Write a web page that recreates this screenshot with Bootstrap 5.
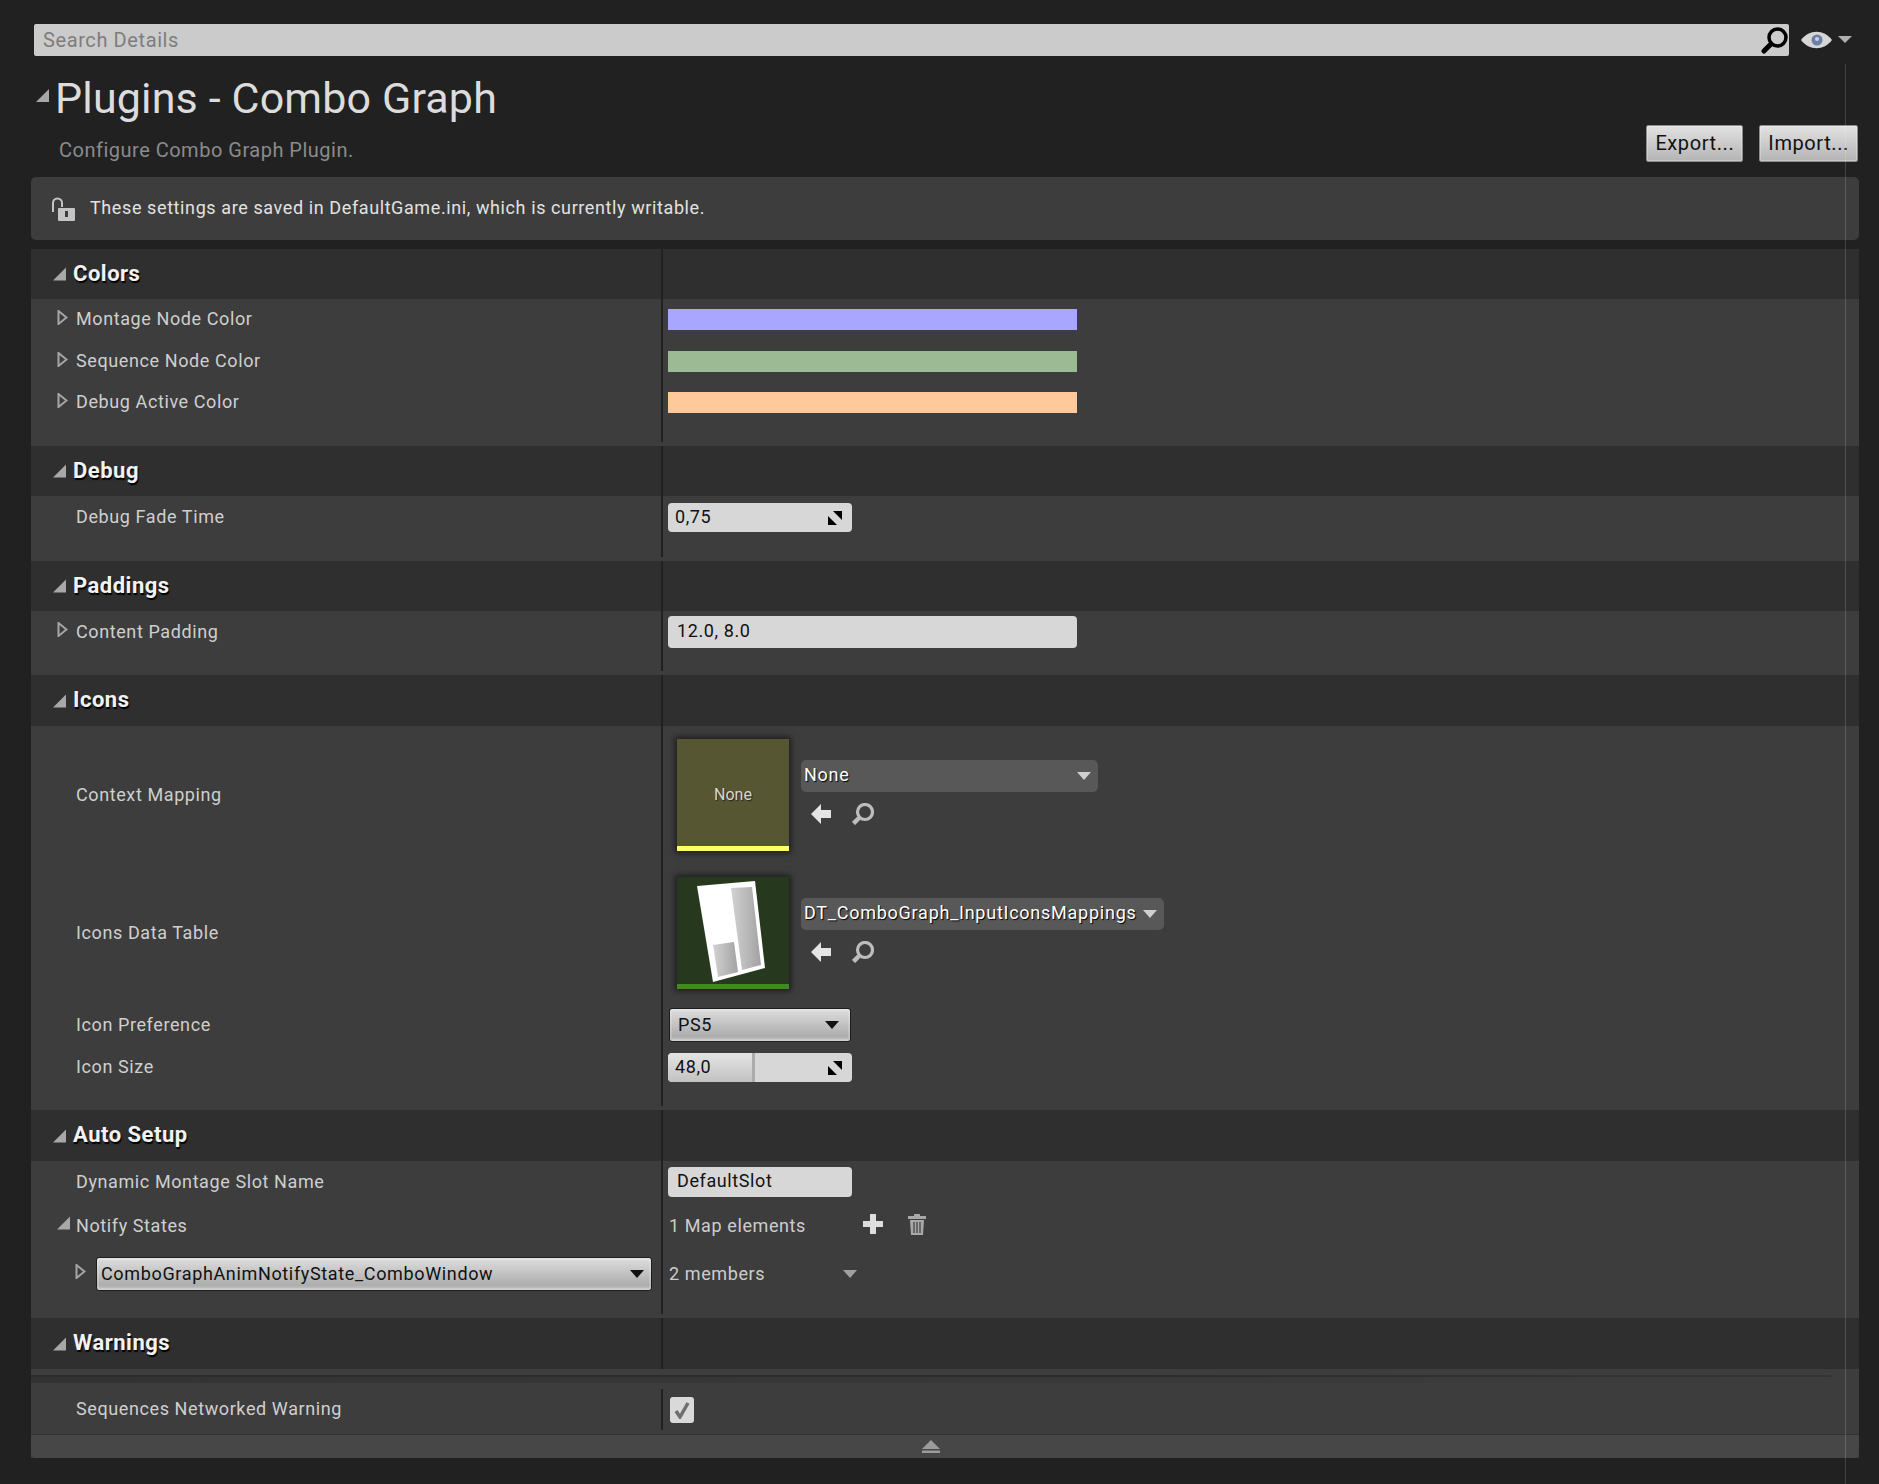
<!DOCTYPE html>
<html lang="en">
<head>
  <meta charset="UTF-8">
  <meta name="viewport" content="width=device-width, initial-scale=1.0">
  <title>Plugins - Combo Graph</title>
  <link href="https://cdn.jsdelivr.net/npm/bootstrap@5.3.0/dist/css/bootstrap.min.css" rel="stylesheet">
  <style>
    body { background: #212121; font-family: Roboto, "Liberation Sans", sans-serif; color: #cdcdcd; min-height: 1484px; position: relative; font-size: 18px; letter-spacing: .6px; overflow: hidden; }
    .ue-page { padding: 24px 20px 10px 31px; }
    .ue-guide { position: absolute; left: 1845px; top: 64px; bottom: 0; width: 1px; background: rgba(255,255,255,.16); }
    .ue-search { margin-left: 3px; width: 1755px; height: 32px; background: #cbcbcb; border-radius: 2px; padding: 0 1px 0 9px; color: #7d7d7d; font-size: 20px; line-height: 32px; }
    .ue-eye { margin-left: 12px; }
    .ue-head { height: 121px; padding-left: 5px; }
    .ue-title-row { gap: 6px; padding-top: 17px; }
    .ue-title-tri { margin-bottom: 6px; }
    .ue-title { font-size: 43px; font-weight: 400; line-height: 50px; color: #dcdcdc; margin: 0; letter-spacing: .15px; }
    .ue-desc { font-size: 20px; color: #8b8b8b; line-height: 24px; margin: 15px 0 0 23px; letter-spacing: .5px; }
    .ue-btn { height: 37px; padding: 0 8px; font-size: 20px; line-height: 35px; color: #111; border: 1px solid #8d8d8d; border-radius: 2px; background: linear-gradient(#e2e2e2, #b4b4b4); box-shadow: inset 0 0 0 1px rgba(255,255,255,.25); }
    .ue-btns { margin-bottom: 15px; gap: 16px; padding-right: 1px; }
    .ue-info { height: 63px; background: #3d3d3d; border-radius: 5px; margin-bottom: 9px; padding-left: 20px; color: #e2e2e2; }
    .ue-info span { margin-left: 15px; margin-bottom: 2px; }
    .ue-section { background: #3d3d3d; }
    .ue-first { border-radius: 5px 5px 0 0; }
    .ue-body { padding-bottom: 4px; }
    .ue-row { display: flex; }
    .ue-left { width: 630px; flex: none; display: flex; align-items: center; padding-left: 26px; position: relative; }
    .ue-right { flex: 1 1 auto; border-left: 2px solid #212121; padding-left: 5px; display: flex; align-items: center; }
    .ue-header { height: 50px; background: #2f2f2f; }
    .ue-header.tall { height: 51px; }
    .ue-header .ue-left { padding-left: 22px; gap: 7px; font-size: 22px; font-weight: 700; color: #f2f2f2; text-shadow: 1px 2px 1px #000; letter-spacing: .5px; }
    .ue-header-name { margin-bottom: 2px; }
    .ue-label { padding-left: 19px; margin-bottom: 2px; color: #cfcfcf; }
    .ue-caret { position: absolute; left: 26px; top: 50%; margin-top: -10px; }
    .ue-nested { left: 44px; }
    .rh-15 { height: 15px; } .rh-18 { height: 18px; } .rh-19 { height: 19px; } .rh-20 { height: 20px; }
    .rh-39 { height: 39px; } .rh-41 { height: 41px; } .rh-42 { height: 42px; } .rh-43 { height: 43px; }
    .rh-46 { height: 46px; } .rh-50 { height: 50px; } .rh-138 { height: 138px; }
    .ue-swatch { width: 409px; height: 21px; }
    .swatch-a { background: #a8a6ff; }
    .swatch-b { background: #9cbb94; }
    .swatch-c { background: #ffc99b; }
    .ue-field { background: #d7d7d7; color: #111; border-radius: 4px; font-size: 18px; }
    .ue-num { width: 184px; height: 29px; padding: 0 10px 0 7px; }
    .ue-num span { margin-bottom: 2px; }
    .ue-text { height: 32px; line-height: 30px; padding-left: 9px; }
    .ue-text.wide { width: 409px; }
    .ue-text.slim { width: 184px; height: 30px; line-height: 27px; }
    .ue-slider { position: relative; overflow: hidden; }
    .ue-handle { position: absolute; left: 0; top: 0; bottom: 0; width: 87px; background: linear-gradient(#e4e4e4, #c2c2c2); border-right: 3px solid #ababab; border-radius: 4px 0 0 4px; }
    .ue-slider span, .ue-slider svg { position: relative; }
    .ue-drop { height: 34px; border: 1px solid #1e1e1e; border-radius: 3px; background: linear-gradient(#dedede, #adadad 85%, #c8c8c8); box-shadow: inset 0 0 0 2px rgba(255,255,255,.18); color: #111; padding: 0 11px 0 8px; }
    .ue-drop span { margin-bottom: 2px; }
    .ue-drop.ps { width: 182px; margin-left: 1px; }
    .ue-drop.cls { width: 556px; margin-left: 39px; padding: 0 7px 0 4px; letter-spacing: .65px; }
    .ue-thumb { width: 112px; height: 112px; margin-left: 9px; box-shadow: 0 0 6px 2px rgba(0,0,0,.55); position: relative; font-size: 16px; letter-spacing: 0; }
    .ue-none { background: #575633; color: #d8d8c8; border-bottom: 5px solid #ffff66; text-shadow: 1px 1px 1px #222; padding-top: 5px; }
    .ue-dt { background: #26381d; border-bottom: 5px solid #3f8a25; }
    .ue-asset { margin-left: 12px; gap: 6px; }
    .ue-combo { height: 32px; background: #585858; border-radius: 5px; padding: 0 7px 0 3px; color: #fff; text-shadow: 1px 1px 1px #000; line-height: 30px; letter-spacing: .75px; }
    .ue-combo span { margin-bottom: 2px; }
    .ue-combo svg { color: #cfcfcf; }
    .ue-combo.short { width: 297px; }
    .ue-combo.long { width: 363px; }
    .ue-tools { gap: 20px; padding-left: 9px; height: 32px; }
    .ue-map { width: 195px; padding-left: 1px; margin-bottom: 2px; }
    .ue-members { width: 175px; padding-left: 1px; margin-bottom: 2px; }
    .ue-dim { color: #a0a0a0; }
    .ue-check { width: 24px; height: 26px; margin-left: 2px; background: #d9d9d9; border-radius: 3px; }
    .ue-band { height: 6px; }
    .ue-line { height: 14px; width: 1800px; background: linear-gradient(90deg, #2c2c2c, #2c2c2c 60%, #353535) top / 100% 2px no-repeat, linear-gradient(90deg, rgba(40,40,40,.5), rgba(61,61,61,0)) top / 100% 8px no-repeat; }
    .ue-foot { height: 24px; background: #474747; border-top: 1px solid #333; border-radius: 0 0 5px 5px; padding-left: 891px; }
  </style>
</head>
<body>

<svg width="0" height="0" class="position-absolute">
  <symbol id="open-tri" viewBox="0 0 14 14"><polygon points="14,0 14,14 0,14" fill="#a8a8a8"/></symbol>
  <symbol id="closed-tri" viewBox="0 0 11 15"><polygon points="1.5,1 9.5,7.5 1.5,14" fill="none" stroke="#a5a5a5" stroke-width="2"/></symbol>
  <symbol id="spin" viewBox="0 0 14 14"><polygon points="5,0 14,0 14,9" fill="#000"/><polygon points="0,5 9,14 0,14" fill="#000"/></symbol>
  <symbol id="down" viewBox="0 0 14 8"><polygon points="0,0 14,0 7,8" fill="currentColor"/></symbol>
  <symbol id="back" viewBox="0 0 22 22"><path d="M11 1 1 11l10 10v-6h10V7H11z" fill="#e4e4e4"/></symbol>
  <symbol id="find" viewBox="0 0 22 22"><circle cx="13" cy="9" r="7.5" fill="none" stroke="#bdbdbd" stroke-width="3.2"/><path d="M7 15 1.5 20.5" stroke="#bdbdbd" stroke-width="4.5"/></symbol>
</svg>

<div class="ue-guide"></div>

<div class="ue-page">
  <div class="d-flex align-items-center">
    <div class="ue-search d-flex justify-content-between align-items-center">
      <span>Search Details</span>
      <svg width="27" height="27" viewBox="0 0 27 27"><circle cx="16.5" cy="10.5" r="8.5" fill="none" stroke="#000" stroke-width="3.5"/><path d="M10 17 3 24" stroke="#000" stroke-width="5" stroke-linecap="round"/></svg>
    </div>
    <svg class="ue-eye" width="52" height="18" viewBox="0 0 52 18">
      <path d="M0 9C8 -2 23 -2 31 9 23 20 8 20 0 9z" fill="#d6d6d6"/>
      <circle cx="16" cy="9" r="5.5" fill="#6a80a8"/><circle cx="16" cy="8" r="2" fill="#c8d2e0"/>
      <polygon points="37,5 51,5 44,12" fill="#b0b0b0"/>
    </svg>
  </div>

  <div class="ue-head d-flex justify-content-between align-items-end">
    <div class="align-self-start">
      <div class="ue-title-row d-flex align-items-center">
        <svg width="13" height="13" class="ue-title-tri"><use href="#open-tri"/></svg>
        <h1 class="ue-title">Plugins - Combo Graph</h1>
      </div>
      <p class="ue-desc">Configure Combo Graph Plugin.</p>
    </div>
    <div class="ue-btns d-flex">
      <div class="ue-btn">Export...</div>
      <div class="ue-btn">Import...</div>
    </div>
  </div>

  <div class="ue-info d-flex align-items-center">
    <svg width="24" height="24" viewBox="0 0 24 24">
      <path d="M2 15V6a4.5 4.5 0 0 1 9 0v4" fill="none" stroke="#c4c4c4" stroke-width="2"/>
      <rect x="7" y="11" width="17" height="13" rx="1" fill="#c4c4c4"/><rect x="14" y="14" width="3" height="6" fill="#3d3d3d"/>
    </svg>
    <span>These settings are saved in DefaultGame.ini, which is currently writable.</span>
  </div>

  <div class="ue-section ue-first">
    <div class="ue-row ue-header"><div class="ue-left"><svg width="13" height="14"><use href="#open-tri"/></svg><span class="ue-header-name">Colors</span></div><div class="ue-right"></div></div>
    <div class="ue-body">
      <div class="ue-row rh-41"><div class="ue-left"><svg class="ue-caret" width="11" height="15"><use href="#closed-tri"/></svg><span class="ue-label">Montage Node Color</span></div><div class="ue-right"><div class="ue-swatch swatch-a"></div></div></div>
      <div class="ue-row rh-43"><div class="ue-left"><svg class="ue-caret" width="11" height="15"><use href="#closed-tri"/></svg><span class="ue-label">Sequence Node Color</span></div><div class="ue-right"><div class="ue-swatch swatch-b"></div></div></div>
      <div class="ue-row rh-39"><div class="ue-left"><svg class="ue-caret" width="11" height="15"><use href="#closed-tri"/></svg><span class="ue-label">Debug Active Color</span></div><div class="ue-right"><div class="ue-swatch swatch-c"></div></div></div>
      <div class="ue-row rh-20"><div class="ue-left"></div><div class="ue-right"></div></div>
    </div>
  </div>

  <div class="ue-section">
    <div class="ue-row ue-header"><div class="ue-left"><svg width="13" height="14"><use href="#open-tri"/></svg><span class="ue-header-name">Debug</span></div><div class="ue-right"></div></div>
    <div class="ue-body">
      <div class="ue-row rh-43"><div class="ue-left"><span class="ue-label">Debug Fade Time</span></div><div class="ue-right"><div class="ue-field ue-num d-flex justify-content-between align-items-center"><span>0,75</span><svg width="14" height="14"><use href="#spin"/></svg></div></div></div>
      <div class="ue-row rh-18"><div class="ue-left"></div><div class="ue-right"></div></div>
    </div>
  </div>

  <div class="ue-section">
    <div class="ue-row ue-header"><div class="ue-left"><svg width="13" height="14"><use href="#open-tri"/></svg><span class="ue-header-name">Paddings</span></div><div class="ue-right"></div></div>
    <div class="ue-body">
      <div class="ue-row rh-42"><div class="ue-left"><svg class="ue-caret" width="11" height="15"><use href="#closed-tri"/></svg><span class="ue-label">Content Padding</span></div><div class="ue-right"><div class="ue-field ue-text wide">12.0, 8.0</div></div></div>
      <div class="ue-row rh-18"><div class="ue-left"></div><div class="ue-right"></div></div>
    </div>
  </div>

  <div class="ue-section">
    <div class="ue-row ue-header tall"><div class="ue-left"><svg width="13" height="14"><use href="#open-tri"/></svg><span class="ue-header-name">Icons</span></div><div class="ue-right"></div></div>
    <div class="ue-body">
      <div class="ue-row rh-138"><div class="ue-left"><span class="ue-label">Context Mapping</span></div><div class="ue-right">
        <div class="ue-thumb ue-none d-flex align-items-center justify-content-center">None</div>
        <div class="ue-asset d-flex flex-column">
          <div class="ue-combo short d-flex justify-content-between align-items-center"><span>None</span><svg width="14" height="8"><use href="#down"/></svg></div>
          <div class="ue-tools d-flex align-items-center"><svg width="22" height="22"><use href="#back"/></svg><svg width="22" height="22"><use href="#find"/></svg></div>
        </div>
      </div></div>
      <div class="ue-row rh-138"><div class="ue-left"><span class="ue-label">Icons Data Table</span></div><div class="ue-right">
        <div class="ue-thumb ue-dt">
          <svg width="112" height="107" viewBox="0 0 112 107" class="d-block">
            <defs><linearGradient id="bar" x1="0" y1="0" x2="1" y2="0"><stop offset="0" stop-color="#d2d2d2"/><stop offset="1" stop-color="#a2a2a2"/></linearGradient></defs>
            <polygon points="20,9 78,4 88,91 36,105" fill="#fff"/>
            <polygon points="54,11 75,10 84,88 65,93" fill="url(#bar)"/>
            <polygon points="36,68 57,65 61,95 41,100" fill="url(#bar)"/>
          </svg>
        </div>
        <div class="ue-asset d-flex flex-column">
          <div class="ue-combo long d-flex justify-content-between align-items-center"><span>DT_ComboGraph_InputIconsMappings</span><svg width="14" height="8"><use href="#down"/></svg></div>
          <div class="ue-tools d-flex align-items-center"><svg width="22" height="22"><use href="#back"/></svg><svg width="22" height="22"><use href="#find"/></svg></div>
        </div>
      </div></div>
      <div class="ue-row rh-46"><div class="ue-left"><span class="ue-label">Icon Preference</span></div><div class="ue-right"><div class="ue-drop ps d-flex justify-content-between align-items-center"><span>PS5</span><svg width="14" height="8"><use href="#down"/></svg></div></div></div>
      <div class="ue-row rh-39"><div class="ue-left"><span class="ue-label">Icon Size</span></div><div class="ue-right"><div class="ue-field ue-num ue-slider d-flex justify-content-between align-items-center"><div class="ue-handle"></div><span>48,0</span><svg width="14" height="14"><use href="#spin"/></svg></div></div></div>
      <div class="ue-row rh-19"><div class="ue-left"></div><div class="ue-right"></div></div>
    </div>
  </div>

  <div class="ue-section">
    <div class="ue-row ue-header tall"><div class="ue-left"><svg width="13" height="14"><use href="#open-tri"/></svg><span class="ue-header-name">Auto Setup</span></div><div class="ue-right"></div></div>
    <div class="ue-body">
      <div class="ue-row rh-42"><div class="ue-left"><span class="ue-label">Dynamic Montage Slot Name</span></div><div class="ue-right"><div class="ue-field ue-text slim">DefaultSlot</div></div></div>
      <div class="ue-row rh-46"><div class="ue-left"><svg class="ue-caret" width="13" height="14"><use href="#open-tri"/></svg><span class="ue-label">Notify States</span></div><div class="ue-right">
        <span class="ue-map">1 Map elements</span>
        <svg width="20" height="20" viewBox="0 0 20 20" class="me-4 mb-1"><path d="M7 0h6v7h7v6h-7v7H7v-7H0V7h7z" fill="#dedede"/></svg>
        <svg width="20" height="21" viewBox="0 0 20 21" class="mb-1"><path d="M7 0h6v2h6v3H1V2h6zM3 6h14l-1 15H4z" fill="#a8a8a8"/><path d="M7 8v11M10 8v11M13 8v11" stroke="#3d3d3d" stroke-width="1.2"/></svg>
      </div></div>
      <div class="ue-row rh-50"><div class="ue-left"><svg class="ue-caret ue-nested" width="11" height="15"><use href="#closed-tri"/></svg><div class="ue-drop cls d-flex justify-content-between align-items-center"><span>ComboGraphAnimNotifyState_ComboWindow</span><svg width="14" height="10"><use href="#down"/></svg></div></div><div class="ue-right">
        <span class="ue-members">2 members</span><svg width="14" height="8" class="ue-dim"><use href="#down"/></svg>
      </div></div>
      <div class="ue-row rh-15"><div class="ue-left"></div><div class="ue-right"></div></div>
    </div>
  </div>

  <div class="ue-section">
    <div class="ue-row ue-header tall"><div class="ue-left"><svg width="13" height="14"><use href="#open-tri"/></svg><span class="ue-header-name">Warnings</span></div><div class="ue-right"></div></div>
    <div class="ue-band"></div>
    <div class="ue-line"></div>
    <div class="ue-body">
      <div class="ue-row rh-41"><div class="ue-left"><span class="ue-label">Sequences Networked Warning</span></div><div class="ue-right"><div class="ue-check d-flex align-items-center justify-content-center"><svg width="16" height="18" viewBox="0 0 16 18"><path d="M2 10l4 6 8-14" fill="none" stroke="#6e6e6e" stroke-width="3.5"/></svg></div></div></div>
    </div>
    <div class="ue-foot d-flex align-items-center"><svg width="18" height="13" viewBox="0 0 18 13"><polygon points="9,0 18,9 0,9" fill="#9c9c9c"/><rect y="10.5" width="18" height="2.5" fill="#9c9c9c"/></svg></div>
  </div>
</div>

<script src="https://cdn.jsdelivr.net/npm/bootstrap@5.3.0/dist/js/bootstrap.bundle.min.js"></script>
</body>
</html>
